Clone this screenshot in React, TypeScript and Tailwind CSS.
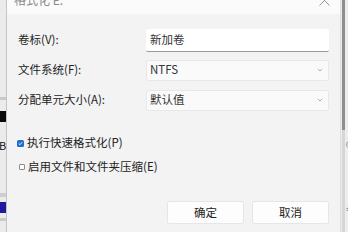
import React from "react";

function Chevron() {
  return (
    <svg width="6" height="4" viewBox="0 0 6 4" className="shrink-0">
      <path d="M0.8 0.9 L3 3 L5.2 0.9" fill="none" stroke="#9a9a9a" strokeWidth="0.8" />
    </svg>
  );
}

export default function App() {
  return (
    <div className="w-[348px] h-[232px] overflow-hidden flex bg-[#ececec] font-[family-name:'Noto_Sans_CJK_SC','Noto_Sans',sans-serif] text-[#222]">
      {/* left background window strip */}
      <div className="w-[7px] shrink-0 h-full flex flex-col bg-[#ebebeb] border-r border-[#c4c4c4] overflow-hidden">
        <div className="h-[97px] shrink-0" />
        <div className="h-[3px] shrink-0 bg-[#c9c9c9]" />
        <div className="h-[11px] shrink-0" />
        <div className="h-[11px] shrink-0 bg-[#0a0a0a]" />
        <div className="h-[17px] shrink-0" />
        <div className="h-[12px] shrink-0 text-[11px] leading-[12px] -ml-[1px] text-[#111]">B</div>
        <div className="h-[42px] shrink-0" />
        <div className="h-[4px] shrink-0 bg-[#cdcdcd]" />
        <div className="h-[5px] shrink-0" />
        <div className="h-[11px] shrink-0 bg-[#1b1b9c]" />
        <div className="h-[5px] shrink-0" />
        <div className="h-[3px] shrink-0 bg-[#c9c9c9]" />
      </div>

      {/* dialog */}
      <div className="w-[333px] shrink-0 h-full flex flex-col bg-[#f3f3f3]">
        {/* title bar */}
        <div className="h-[14px] shrink-0 bg-[#fbfbfb] overflow-hidden flex items-start justify-between pl-[7px] pr-[10px]">
          <div className="-mt-[8px] text-[12px] leading-[16px] text-[#8a8a8a]">格式化 E:</div>
          <svg width="11" height="11" viewBox="0 0 11 11" className="-mt-[5px]">
            <path d="M0.5 0.5 L10.5 10.5 M10.5 0.5 L0.5 10.5" stroke="#8a8a8a" strokeWidth="0.9" />
          </svg>
        </div>

        {/* body */}
        <div className="flex-1 flex flex-col px-[11px] pt-[11px]">
          <div className="h-[30px] flex items-center">
            <div className="w-[128px] text-[11.5px]">卷标(V):</div>
            <div className="flex-1 h-[23px] bg-white border-b border-[#9a9a9a] rounded-[2px] flex items-center px-[4px] text-[11.5px] text-[#333]">
              新加卷
            </div>
          </div>
          <div className="h-[30px] flex items-center">
            <div className="w-[128px] text-[11.5px]">文件系统(F):</div>
            <div className="flex-1 h-[21px] bg-[#fafafa] border border-[#e8e8e8] rounded-[2px] flex items-center justify-between pl-[3px] pr-[5px] text-[11.5px] text-[#333]">
              <span>NTFS</span>
              <Chevron />
            </div>
          </div>
          <div className="h-[30px] flex items-center">
            <div className="w-[128px] text-[11.5px]">分配单元大小(A):</div>
            <div className="flex-1 h-[21px] bg-[#fafafa] border border-[#e8e8e8] rounded-[2px] flex items-center justify-between pl-[3px] pr-[5px] text-[11.5px] text-[#333]">
              <span>默认值</span>
              <Chevron />
            </div>
          </div>

          <div className="mt-[16px] h-[24px] flex items-center">
            <div className="w-[7px] h-[7px] ml-[-1px] rounded-[1.5px] bg-[#1f6fd1] flex items-center justify-center">
              <svg width="5" height="5" viewBox="0 0 5 5">
                <path d="M0.8 2.6 L2 3.7 L4.2 1.2" fill="none" stroke="white" strokeWidth="0.9" />
              </svg>
            </div>
            <span className="ml-[3px] text-[11.5px]">执行快速格式化(P)</span>
          </div>
          <div className="h-[24px] flex items-center">
            <div className="w-[6px] h-[6px] ml-[1px] bg-white border border-[#8c8c8c] rounded-[1px]" />
            <span className="ml-[3px] text-[11.5px]">启用文件和文件夹压缩(E)</span>
          </div>

          <div className="mt-[22px] flex justify-end gap-[8px]">
            <div className="w-[77px] h-[23px] bg-[#fdfdfd] border border-[#e6e6e6] rounded-[2px] flex items-center justify-center text-[11.5px]">
              确定
            </div>
            <div className="w-[77px] h-[23px] bg-[#fdfdfd] border border-[#e6e6e6] rounded-[2px] flex items-center justify-center text-[11.5px]">
              取消
            </div>
          </div>
        </div>
      </div>

      {/* right background strip */}
      <div className="flex-1 min-w-0 h-full flex bg-[#ededed] border-l border-[#dcdcdc] overflow-hidden">
        <div className="w-[1px] shrink-0" />
        <div className="w-[3px] shrink-0 flex flex-col">
          <div className="h-[130px] bg-[#8e8e8e]" />
          <div className="flex-1 bg-[#d6d6d6]" />
        </div>
        <div className="flex-1 min-w-0 flex flex-col text-[9px] leading-[10px] text-[#888] overflow-hidden">
          <div className="h-[140px] shrink-0" />
          <div>⊖</div>
          <div className="h-[55px] shrink-0" />
          <div>≤</div>
        </div>
      </div>
    </div>
  );
}
